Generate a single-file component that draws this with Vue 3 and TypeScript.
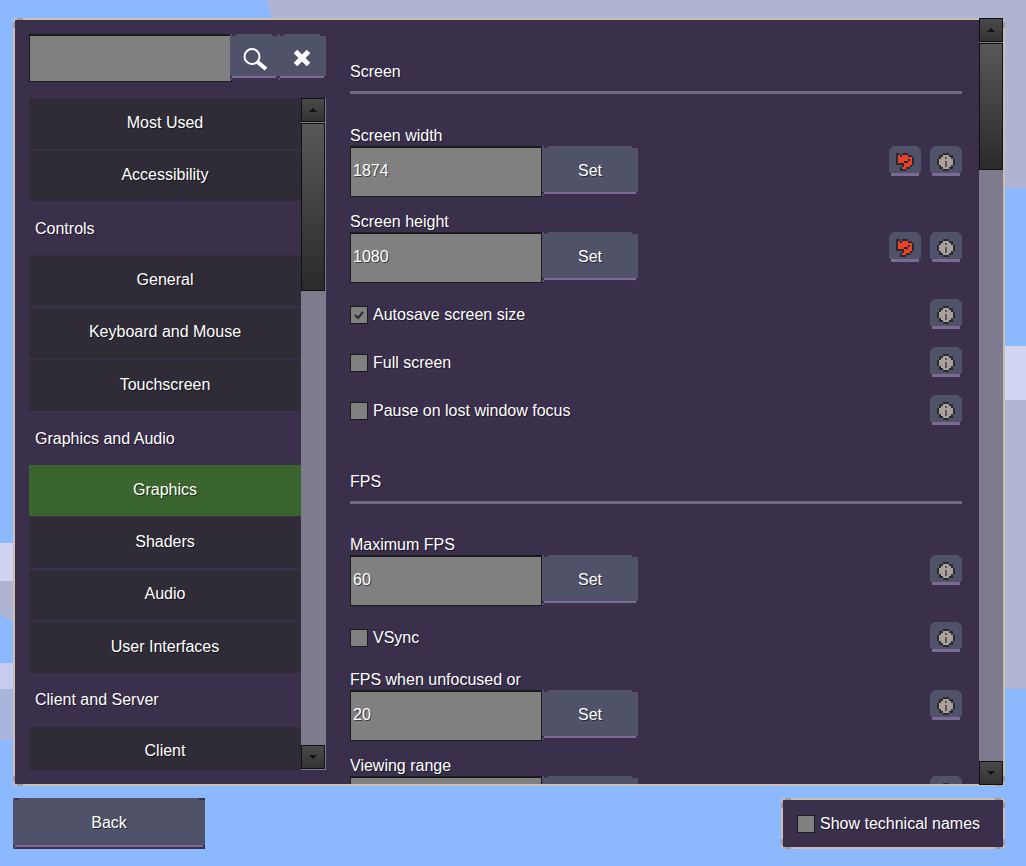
<script setup lang="ts">
import { computed } from 'vue'

type NavRow = { text: string; kind: 'item' | 'group'; active?: boolean }
type Setting =
  | { kind: 'heading'; label: string }
  | { kind: 'field'; label: string; value: string; changed?: boolean }
  | { kind: 'check'; label: string; checked?: boolean }

const navRows: NavRow[] = [
  { text: 'Most Used', kind: 'item' },
  { text: 'Accessibility', kind: 'item' },
  { text: 'Controls', kind: 'group' },
  { text: 'General', kind: 'item' },
  { text: 'Keyboard and Mouse', kind: 'item' },
  { text: 'Touchscreen', kind: 'item' },
  { text: 'Graphics and Audio', kind: 'group' },
  { text: 'Graphics', kind: 'item', active: true },
  { text: 'Shaders', kind: 'item' },
  { text: 'Audio', kind: 'item' },
  { text: 'User Interfaces', kind: 'item' },
  { text: 'Client and Server', kind: 'group' },
  { text: 'Client', kind: 'item' },
]

const settings: Setting[] = [
  { kind: 'heading', label: 'Screen' },
  { kind: 'field', label: 'Screen width', value: '1874', changed: true },
  { kind: 'field', label: 'Screen height', value: '1080', changed: true },
  { kind: 'check', label: 'Autosave screen size', checked: true },
  { kind: 'check', label: 'Full screen' },
  { kind: 'check', label: 'Pause on lost window focus' },
  { kind: 'heading', label: 'FPS' },
  { kind: 'field', label: 'Maximum FPS', value: '60' },
  { kind: 'check', label: 'VSync' },
  { kind: 'field', label: 'FPS when unfocused or', value: '20' },
  { kind: 'field', label: 'Viewing range', value: '190' },
]

// the two small icons are pixel art, 9x9 cells at 2px each
const palette: Record<string, string> = { D: '#2b2a2e', G: '#a8a19c', I: '#5c5755', R: '#e8432a' }

const infoMap = [
  '...DDD...',
  '.DDGGGDD.',
  '.DGGIGGD.',
  'DGGGGGGGD',
  'DGGGIGGGD',
  'DGGGIGGGD',
  '.DGGIGGD.',
  '.DDGGGDD.',
  '...DDD...',
]

const resetMap = [
  'DD.DDD...',
  'DRDRRRDD.',
  'DRRRRRRRD',
  'DRRRRRDRD',
  'DRRRDDRRD',
  'DDDDRRRRD',
  '...DRRRD.',
  '..DRRDD..',
  '..DDD....',
]

function toCells(map: string[]) {
  const cells: { x: number; y: number; fill: string }[] = []
  map.forEach((row, y) => {
    row.split('').forEach((c, x) => {
      if (c !== '.') cells.push({ x, y, fill: palette[c] })
    })
  })
  return cells
}

const infoCells = computed(() => toCells(infoMap))
const resetCells = computed(() => toCells(resetMap))
</script>

<template>
  <div class="page">
    <svg class="sky" width="1026" height="866" viewBox="0 0 1026 866" aria-hidden="true">
      <polygon points="267,0 1026,0 1026,188 900,188 272,18" fill="#b0b4d3" />
      <rect x="1000" y="346" width="26" height="54" fill="#d3d6f3" />
      <rect x="1000" y="400" width="26" height="289" fill="#b1b6d5" />
      <rect x="0" y="543" width="20" height="38" fill="#d0d3f2" />
      <polygon points="0,581 20,581 20,624 0,615" fill="#b0b4d3" />
      <rect x="0" y="663" width="20" height="26" fill="#c6cbf0" />
      <rect x="0" y="689" width="20" height="51" fill="#a9b5da" />
    </svg>

    <div class="window frame">
      <aside class="sidebar">
        <div class="search">
          <input class="text-input search-input" type="text" readonly />
          <button type="button" class="btn search-btn">
            <svg width="28" height="28" viewBox="0 0 28 28">
              <circle cx="12" cy="13.5" r="7.5" fill="none" stroke="#fff" stroke-width="2" />
              <line x1="17.5" y1="19" x2="26" y2="26" stroke="#fff" stroke-width="4" />
            </svg>
          </button>
          <button type="button" class="btn search-btn">
            <svg width="20" height="20" viewBox="0 0 20 20">
              <path d="M3.5 4.5 16.5 17.5M16.5 4.5 3.5 17.5" fill="none" stroke="#fff" stroke-width="5" />
            </svg>
          </button>
        </div>

        <div class="nav">
          <div class="nav-list">
            <div
              v-for="row in navRows"
              :key="row.text"
              class="nav-row"
              :class="{ 'nav-row--group': row.kind === 'group' }"
            >
              <span v-if="row.kind === 'group'" class="nav-group">{{ row.text }}</span>
              <div v-else class="nav-item" :class="{ 'nav-item--active': row.active }">{{ row.text }}</div>
            </div>
          </div>
          <div class="scrollbar scrollbar--nav">
            <div class="scroll-btn"><span class="arrow-up"></span></div>
            <div class="scroll-track"><div class="scroll-thumb thumb-nav"></div></div>
            <div class="scroll-btn"><span class="arrow-down"></span></div>
          </div>
        </div>
      </aside>

      <main class="content">
        <template v-for="item in settings" :key="item.label">
          <section v-if="item.kind === 'heading'" class="heading">
            <h2>{{ item.label }}</h2>
            <div class="rule"></div>
          </section>

          <div v-else class="setting" :class="item.kind === 'field' ? 'setting--field' : 'setting--check'">
            <div v-if="item.kind === 'field'" class="field-main">
              <label class="field-label">{{ item.label }}</label>
              <div class="field-row">
                <input class="text-input" type="text" readonly :value="item.value" />
                <button type="button" class="btn set-btn">Set</button>
              </div>
            </div>
            <label v-else class="check">
              <span class="checkbox">
                <svg v-if="item.checked" width="16" height="16" viewBox="0 0 16 16">
                  <path d="M4 8 7 11 12 5" fill="none" stroke="#2b2a2e" stroke-width="2" />
                </svg>
              </span>
              {{ item.label }}
            </label>

            <div class="actions">
              <button v-if="item.kind === 'field' && item.changed" type="button" class="icon-btn">
                <svg width="18" height="18" viewBox="0 0 9 9" shape-rendering="crispEdges">
                  <rect v-for="(c, i) in resetCells" :key="i" :x="c.x" :y="c.y" width="1" height="1" :fill="c.fill" />
                </svg>
              </button>
              <button type="button" class="icon-btn">
                <svg width="18" height="18" viewBox="0 0 9 9" shape-rendering="crispEdges">
                  <rect v-for="(c, i) in infoCells" :key="i" :x="c.x" :y="c.y" width="1" height="1" :fill="c.fill" />
                </svg>
              </button>
            </div>
          </div>
        </template>
      </main>

      <div class="scrollbar scrollbar--main">
        <div class="scroll-btn"><span class="arrow-up"></span></div>
        <div class="scroll-track"><div class="scroll-thumb thumb-main"></div></div>
        <div class="scroll-btn"><span class="arrow-down"></span></div>
      </div>
    </div>

    <div class="footer">
      <button type="button" class="btn back-btn">Back</button>
      <div class="tech frame">
        <label class="check">
          <span class="checkbox"></span>
          Show technical names
        </label>
      </div>
    </div>
  </div>
</template>

<style>
html,
body {
  margin: 0;
  background: #8cb9fd;
}
</style>

<style scoped>
.page {
  position: relative;
  box-sizing: border-box;
  width: 1026px;
  height: 866px;
  padding: 18px 21px 0 13px;
  overflow: hidden;
  background: #8cb9fd;
  color: #fff;
  font-family: "Liberation Sans", Arial, sans-serif;
  font-size: 16px;
  line-height: 22px;
  text-shadow: 1px 1px 0 rgba(0, 0, 0, 0.55);
}

.sky {
  position: absolute;
  left: 0;
  top: 0;
}

button,
input {
  margin: 0;
  border: none;
  padding: 0;
  color: inherit;
  font: inherit;
  text-shadow: inherit;
}

.frame {
  --edge: #a39a9b;
  position: relative;
  box-sizing: border-box;
  border: 2px solid transparent;
  background:
    linear-gradient(var(--edge), var(--edge)) left 4px top 0 / 6px 2px no-repeat border-box,
    linear-gradient(var(--edge), var(--edge)) right 4px top 0 / 6px 2px no-repeat border-box,
    linear-gradient(var(--edge), var(--edge)) left 4px bottom 0 / 6px 2px no-repeat border-box,
    linear-gradient(var(--edge), var(--edge)) right 4px bottom 0 / 6px 2px no-repeat border-box,
    linear-gradient(var(--edge), var(--edge)) left 0 top 4px / 2px 6px no-repeat border-box,
    linear-gradient(var(--edge), var(--edge)) right 0 top 4px / 2px 6px no-repeat border-box,
    linear-gradient(var(--edge), var(--edge)) left 0 bottom 4px / 2px 6px no-repeat border-box,
    linear-gradient(var(--edge), var(--edge)) right 0 bottom 4px / 2px 6px no-repeat border-box,
    linear-gradient(#3b304c, #3b304c) padding-box,
    linear-gradient(#cbbfb1, #cbbfb1) border-box;
  clip-path: polygon(2px 0, calc(100% - 2px) 0, 100% 2px, 100% calc(100% - 2px), calc(100% - 2px) 100%, 2px 100%, 0 calc(100% - 2px), 0 2px);
}

.window {
  display: flex;
  height: 768px;
}

.sidebar {
  flex: none;
  width: 297px;
  margin: 14px 0 0 14px;
}

.search {
  display: flex;
  height: 48px;
}

.text-input {
  display: block;
  box-sizing: border-box;
  flex: none;
  width: 192px;
  height: 51px;
  padding: 0 0 2px 2px;
  border: 1px solid #1b1b1b;
  border-top-width: 2px;
  border-radius: 0;
  outline: none;
  background: #808080;
}

.search-input {
  width: 203px;
  height: 48px;
}

.btn {
  --rim: #3d304d;
  background:
    linear-gradient(var(--rim), var(--rim)) left 2px top 0 / 4px 2px no-repeat,
    linear-gradient(var(--rim), var(--rim)) right 0 top 0 / 6px 2px no-repeat,
    linear-gradient(var(--rim), var(--rim)) left 0 bottom 2px / 2px 2px no-repeat,
    linear-gradient(var(--rim), var(--rim)) right 0 bottom 2px / 2px 2px no-repeat,
    linear-gradient(var(--rim), var(--rim)) left 2px bottom 0 / calc(100% - 2px) 2px no-repeat,
    linear-gradient(#7b6b94, #7b6b94) left 0 bottom 2px / 100% 2px no-repeat,
    #4f5268;
  cursor: pointer;
}

.search-btn {
  display: flex;
  flex: none;
  align-items: center;
  justify-content: center;
  width: 48px;
  height: 46px;
}

.search-btn:first-of-type {
  margin-left: -2px;
}

.nav {
  display: flex;
  height: 672px;
  margin-top: 16px;
  overflow: hidden;
}

.nav-list {
  flex: 1;
  min-width: 0;
}

.nav-row {
  box-sizing: border-box;
  height: 52.4px;
  padding-bottom: 1.4px;
}

.nav-item {
  display: flex;
  align-items: center;
  justify-content: center;
  height: 100%;
  padding-bottom: 1.4px;
  box-sizing: border-box;
  background: #2f2c37;
  clip-path: polygon(2px 0, calc(100% - 2px) 0, 100% 2px, 100% calc(100% - 2px), calc(100% - 2px) 100%, 2px 100%, 0 calc(100% - 2px), 0 2px);
}

.nav-item--active {
  background: #3a652f;
  clip-path: none;
}

.nav-row--group {
  display: flex;
  align-items: center;
  padding: 0 0 0 6px;
}

.scrollbar {
  display: flex;
  flex: none;
  flex-direction: column;
  background: #7f7b8e;
}

.scrollbar--nav {
  width: 25px;
  padding-right: 1px;
  box-sizing: border-box;
  height: 672px;
}

.scrollbar--main {
  width: 24px;
  margin: -2px 0 -1px 17px;
}

.scroll-btn {
  display: flex;
  flex: none;
  align-items: center;
  justify-content: center;
  box-sizing: border-box;
  height: 24px;
  border: 1px solid #111;
  background: linear-gradient(#4a4a4a, #333);
}

.scroll-track {
  flex: 1;
  min-height: 0;
  padding-top: 1px;
}

.scrollbar--nav .scroll-btn:last-child {
  margin-bottom: 1px;
}

.scroll-thumb {
  box-sizing: border-box;
  border: 1px solid #111;
  background: linear-gradient(#585858, #2a2a2a);
}

.thumb-nav {
  height: 168px;
}

.thumb-main {
  height: 127px;
}

.arrow-up,
.arrow-down {
  width: 0;
  height: 0;
  border-left: 4px solid transparent;
  border-right: 4px solid transparent;
}

.arrow-up {
  border-bottom: 4px solid #111;
}

.arrow-down {
  border-top: 4px solid #111;
}

.content {
  flex: none;
  width: 612px;
  margin-left: 24px;
  padding-top: 40px;
  overflow: hidden;
}

.heading h2 {
  height: 22px;
  margin: 0;
  font-size: 16px;
  font-weight: 400;
  line-height: 24px;
}

.rule {
  height: 3px;
  margin: 9px 0 30px;
  background: #6f6a80;
}

.setting + .heading {
  margin-top: 45px;
}

.setting + .heading .rule {
  margin-bottom: 29px;
}

.setting {
  display: flex;
  justify-content: space-between;
}

.setting + .setting {
  margin-top: 16px;
}

.setting--field + .setting--field {
  margin-top: 13px;
}

.setting--check + .setting--check {
  margin-top: 18px;
}

.setting--check {
  align-items: center;
  height: 30px;
}

.setting--check .check {
  margin-top: 2px;
}

.field-label {
  display: block;
  height: 22px;
  line-height: 24px;
}

.field-row {
  display: flex;
  align-items: flex-start;
}

.set-btn {
  width: 96px;
  height: 50px;
}

.setting--field .actions {
  padding-top: 22px;
}

.actions {
  display: flex;
  gap: 9px;
}

.icon-btn {
  display: flex;
  align-items: center;
  justify-content: center;
  width: 32px;
  height: 30px;
  padding-top: 2px;
  background: linear-gradient(#7b6b94, #7b6b94) left 0 bottom 0 / 100% 3px no-repeat, #4f5268;
  clip-path: polygon(4px 0, calc(100% - 4px) 0, calc(100% - 2px) 2px, 100% 4px, 100% calc(100% - 4px), calc(100% - 2px) calc(100% - 3px), calc(100% - 2px) 100%, 2px 100%, 2px calc(100% - 3px), 0 calc(100% - 4px), 0 4px, 2px 2px);
  cursor: pointer;
}

.check {
  display: flex;
  align-items: center;
  gap: 5px;
}

.checkbox {
  display: flex;
  flex: none;
  align-items: center;
  justify-content: center;
  box-sizing: border-box;
  width: 18px;
  height: 18px;
  border: 1px solid #1b1b1b;
  background: #808080;
}

.footer {
  display: flex;
  justify-content: space-between;
  margin-top: 12px;
}

.back-btn {
  width: 192px;
  height: 51px;
  padding-bottom: 1px;
}

.tech {
  display: flex;
  align-items: center;
  box-sizing: border-box;
  width: 224px;
  height: 51px;
  padding: 0 0 0 14px;
}
</style>
